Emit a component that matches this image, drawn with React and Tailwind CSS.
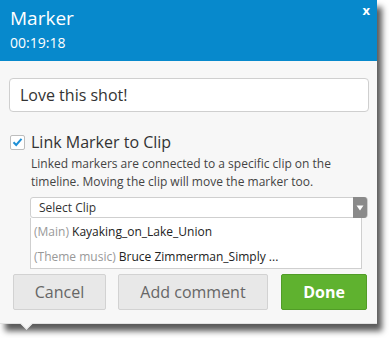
export default function App() {
  return (
    <div className="w-[389px] h-[338px] bg-white" style={{ fontFamily: '"Open Sans", "Noto Sans", sans-serif' }}>
      <div className="relative w-[377px] h-[324px] bg-[#f7f7f7] border-b border-[#e2e2e2] shadow-[5px_7px_6px_rgba(0,0,0,0.65)]">
        <div className="h-[61px] bg-[#0789cc] pl-[10px] pt-[5px] text-white relative">
          <div className="text-[19px] leading-[27px]">Marker</div>
          <div className="text-[14px] leading-[18px] mt-[2px]">00:19:18</div>
          <div className="absolute right-[7px] top-[2px] text-[13px] font-bold leading-[16px]">x</div>
        </div>
        <div className="pt-[17px] px-[9px]">
          <div className="w-[360px] h-[34px] bg-white border border-[#cfcfcf] rounded-[4px] flex items-center pl-[10px] text-[16px] text-[#333]">
            Love this shot!
          </div>
          <div className="flex items-center mt-[21px] h-[18px]">
            <div className="w-[15px] h-[15px] ml-[1px] bg-white border border-[#bdbdbd] rounded-[2px] flex items-center justify-center">
              <svg width="11" height="10" viewBox="0 0 11 10">
                <path d="M1.5 5.2 L4.2 8 L9.5 1.8" fill="none" stroke="#1e8fd6" strokeWidth="2" />
              </svg>
            </div>
            <span className="ml-[6px] text-[16px] text-[#333] leading-[18px]">Link Marker to Clip</span>
          </div>
          <div className="ml-[22px] mt-[4px] text-[12px] leading-[18px] text-[#444] w-[330px]">
            Linked markers are connected to a specific clip on the timeline. Moving the clip will move the marker too.
          </div>
          <div className="ml-[21px] mt-[6px] w-[338px] h-[21px] bg-white border border-[#cfcfcf] rounded-[3px] flex items-center justify-between">
            <span className="pl-[8px] text-[12px] text-[#333]">Select Clip</span>
            <div className="w-[14px] h-[21px] bg-[#8a8a8a] rounded-r-[3px] flex items-center justify-center">
              <svg width="8" height="6" viewBox="0 0 8 6">
                <path d="M0.5 0.5 L7.5 0.5 L4 5.5 Z" fill="#ffffff" />
              </svg>
            </div>
          </div>
          <div className="ml-[21px] w-[332px] h-[51px] bg-white border border-t-0 border-[#cfcfcf] pl-[3px] text-[12px] leading-[25px]">
            <div className="text-[#222] pt-[1px]"><span className="text-[#999]">(Main)</span> Kayaking_on_Lake_Union</div>
            <div className="text-[#222]"><span className="text-[#999]">(Theme music)</span> Bruce Zimmerman_Simply ...</div>
          </div>
          <div className="flex mt-[5px] ml-[4px]">
            <div className="w-[93px] h-[36px] bg-[#e8e8e8] border border-[#d2d2d2] rounded-[2px] flex items-center justify-center text-[16px] text-[#666]">Cancel</div>
            <div className="ml-[12px] w-[150px] h-[36px] bg-[#e8e8e8] border border-[#d2d2d2] rounded-[2px] flex items-center justify-center text-[16px] text-[#666]">Add comment</div>
            <div className="ml-[13px] w-[86px] h-[36px] bg-[#5fb22f] border border-[#519c27] rounded-[2px] flex items-center justify-center text-[16px] font-bold text-white">Done</div>
          </div>
        </div>
        <div className="absolute left-[22px] bottom-[-5px] w-[9px] h-[9px] bg-[#f7f7f7] rotate-45 border-r border-b border-[#e2e2e2]"></div>
      </div>
    </div>
  );
}
